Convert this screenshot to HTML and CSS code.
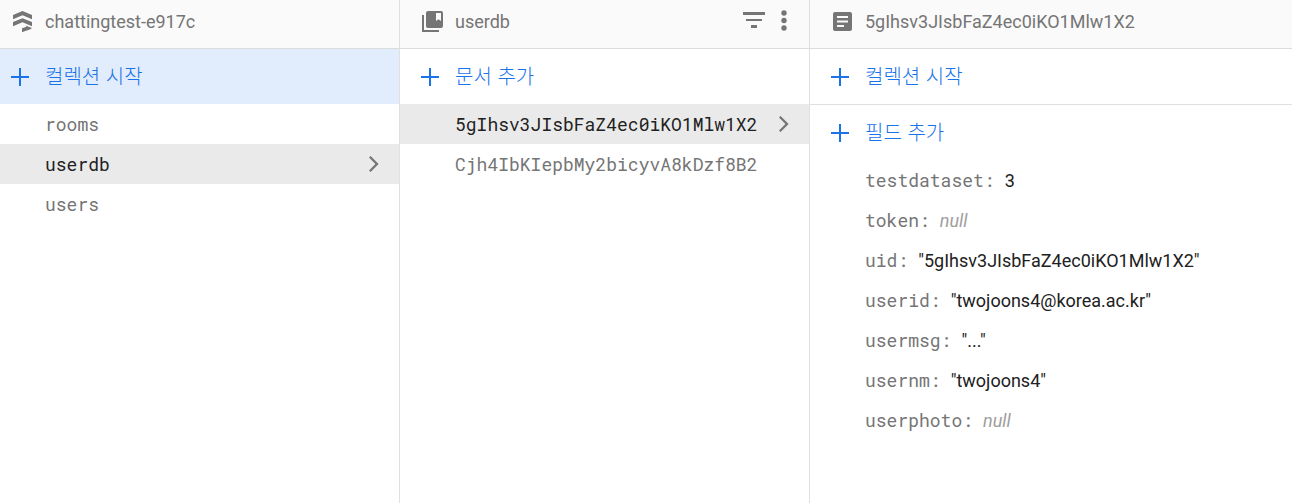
FILE: index.html
```html
<!DOCTYPE html>
<html lang="ko">
<head>
<meta charset="utf-8">
<meta name="viewport" content="width=device-width, initial-scale=1">
<title>Firestore</title>
<link rel="stylesheet" href="styles.css">
</head>
<body>
<svg class="defs" aria-hidden="true">
  <symbol id="plus" viewBox="0 0 20 20"><path d="M9 1h2v8h8v2h-8v8H9v-8H1V9h8z"/></symbol>
  <symbol id="chevron" viewBox="0 0 12 18"><path d="M1 2.6 2.6 1l8 8-8 8L1 15.4 7.4 9z"/></symbol>
</svg>
<main class="panels">
  <section class="panel panel-root">
    <header class="panel-head">
      <svg class="head-icon" viewBox="0 0 24 24" aria-hidden="true"><path d="M12.5 1 22 5v4.2l-9.5-4-9.5 4V5zM12.5 8.2 22 12v4.2l-9.5-4-9.5 4V12zM15.5 15.6 22 18c-1.5 1.8-4 1.7-6 2.8L12 22.2v-4l4.5-1.5z"/></svg>
      <h2 class="head-title">chattingtest-e917c</h2>
    </header>
    <button class="add add-hover" type="button"><svg class="plus" aria-hidden="true"><use href="#plus"/></svg><span class="add-label">컬렉션 시작</span></button>
    <nav class="list">
      <a class="item" href="#rooms">rooms</a>
      <a class="item item-active" href="#userdb">userdb<svg class="chevron" aria-hidden="true"><use href="#chevron"/></svg></a>
      <a class="item" href="#users">users</a>
    </nav>
  </section>
  <section class="panel panel-collection">
    <header class="panel-head">
      <svg class="head-icon" viewBox="0 0 24 24" aria-hidden="true"><path d="M2 5h2v15h15v2H2zM8 1h13q2 0 2 2v13q0 2-2 2H8q-2 0-2-2V3q0-2 2-2zm8 2v8l2.5-1.8L21 11V3z" fill-rule="evenodd"/></svg>
      <h2 class="head-title">userdb</h2>
      <div class="actions">
        <button class="action" type="button" aria-label="필터"><svg class="head-icon" viewBox="0 0 24 24" aria-hidden="true"><path d="M1 2h22v3H1zM4 9h16v2H4zM9 15h6v3H9z"/></svg></button>
        <button class="action action-menu" type="button" aria-label="메뉴"><svg class="dots" viewBox="0 0 8 24" aria-hidden="true"><circle cx="4" cy="3" r="2.7"/><circle cx="4" cy="10.5" r="2.7"/><circle cx="4" cy="18" r="2.7"/></svg></button>
      </div>
    </header>
    <button class="add" type="button"><svg class="plus" aria-hidden="true"><use href="#plus"/></svg><span class="add-label">문서 추가</span></button>
    <nav class="list">
      <a class="item item-active" href="#doc1">5gIhsv3JIsbFaZ4ec0iKO1Mlw1X2<svg class="chevron" aria-hidden="true"><use href="#chevron"/></svg></a>
      <a class="item" href="#doc2">Cjh4IbKIepbMy2bicyvA8kDzf8B2</a>
    </nav>
  </section>
  <section class="panel panel-document">
    <header class="panel-head">
      <svg class="head-icon" viewBox="0 0 24 24" aria-hidden="true"><path d="M5 2h15q2 0 2 2v15q0 2-2 2H5q-2 0-2-2V4q0-2 2-2zm2 4v2h11V6zm0 4.500v2h11v-2zm0 4.500v2h7v-2z" fill-rule="evenodd"/></svg>
      <h2 class="head-title">5gIhsv3JIsbFaZ4ec0iKO1Mlw1X2</h2>
    </header>
    <button class="add add-line" type="button"><svg class="plus" aria-hidden="true"><use href="#plus"/></svg><span class="add-label">컬렉션 시작</span></button>
    <button class="add" type="button"><svg class="plus" aria-hidden="true"><use href="#plus"/></svg><span class="add-label">필드 추가</span></button>
    <dl class="fields">
      <div class="field"><dt>testdataset:</dt><dd>3</dd></div>
      <div class="field"><dt>token:</dt><dd class="null">null</dd></div>
      <div class="field"><dt>uid:</dt><dd>"5gIhsv3JIsbFaZ4ec0iKO1Mlw1X2"</dd></div>
      <div class="field"><dt>userid:</dt><dd>"twojoons4@korea.ac.kr"</dd></div>
      <div class="field"><dt>usermsg:</dt><dd>"..."</dd></div>
      <div class="field"><dt>usernm:</dt><dd>"twojoons4"</dd></div>
      <div class="field"><dt>userphoto:</dt><dd class="null">null</dd></div>
    </dl>
  </section>
</main>
</body>
</html>
```
FILE: styles.css
```css
* { box-sizing: border-box; }
body {
  margin: 0;
  background: #fff;
  color: #212121;
  font: 18px/24px Roboto, "Noto Sans CJK KR", sans-serif;
}
.defs { display: none; }
.panels { display: grid; grid-template-columns: 400fr 410fr 482fr; min-height: 100vh; }
.panel { --inset: 20px; min-width: 0; border-right: 1px solid #e0e0e0; }
.panel-root { --inset: 10px; }
.panel-document { border-right: 0; }
.panel-head {
  display: flex;
  align-items: center;
  gap: 11px;
  height: 49px;
  padding: 0 13px 5px var(--inset);
  background: #fafafa;
  border-bottom: 1px solid #dcdcdc;
  color: #757575;
}
.head-title { margin: 0; font-size: 18px; font-weight: 400; }
.head-icon { flex: none; display: block; width: 24px; height: 24px; fill: #757575; }
.actions { display: flex; align-items: center; gap: 6px; margin-left: auto; }
.action { padding: 0; border: 0; background: none; }
.action-menu { width: 24px; }
.dots { display: block; width: 8px; height: 24px; margin: 0 auto; fill: #757575; }
.add {
  display: flex;
  align-items: center;
  gap: 15px;
  width: 100%;
  height: 55px;
  padding: 0 var(--inset);
  border: 0;
  background: none;
  color: #1a73e8;
  font: 300 20px/24px "Noto Sans CJK KR", sans-serif;
  text-align: left;
}
.add-label { padding-bottom: 2px; }
.add-hover { background: #e1edfc; }
.add-line { height: 56px; border-bottom: 1px solid #e0e0e0; }
.plus { width: 20px; height: 20px; fill: #1a73e8; }
.list, .field dt { font-family: "Roboto Mono", "Liberation Mono", monospace; }
.item {
  display: flex;
  align-items: center;
  justify-content: space-between;
  height: 40px;
  padding: 0 19px 0 calc(var(--inset) + 35px);
  color: #757575;
  text-decoration: none;
}
.item-active { background: #eaeaea; color: #212121; }
.chevron { flex: none; width: 12px; height: 18px; fill: #757575; }
.fields { margin: 0; padding-left: 55px; }
.field { display: flex; align-items: baseline; gap: 10px; height: 40px; padding-top: 8px; }
.field dt { color: #757575; }
.field dd { margin: 0; }
.field .null { color: #9e9e9e; font-style: italic; }
```
